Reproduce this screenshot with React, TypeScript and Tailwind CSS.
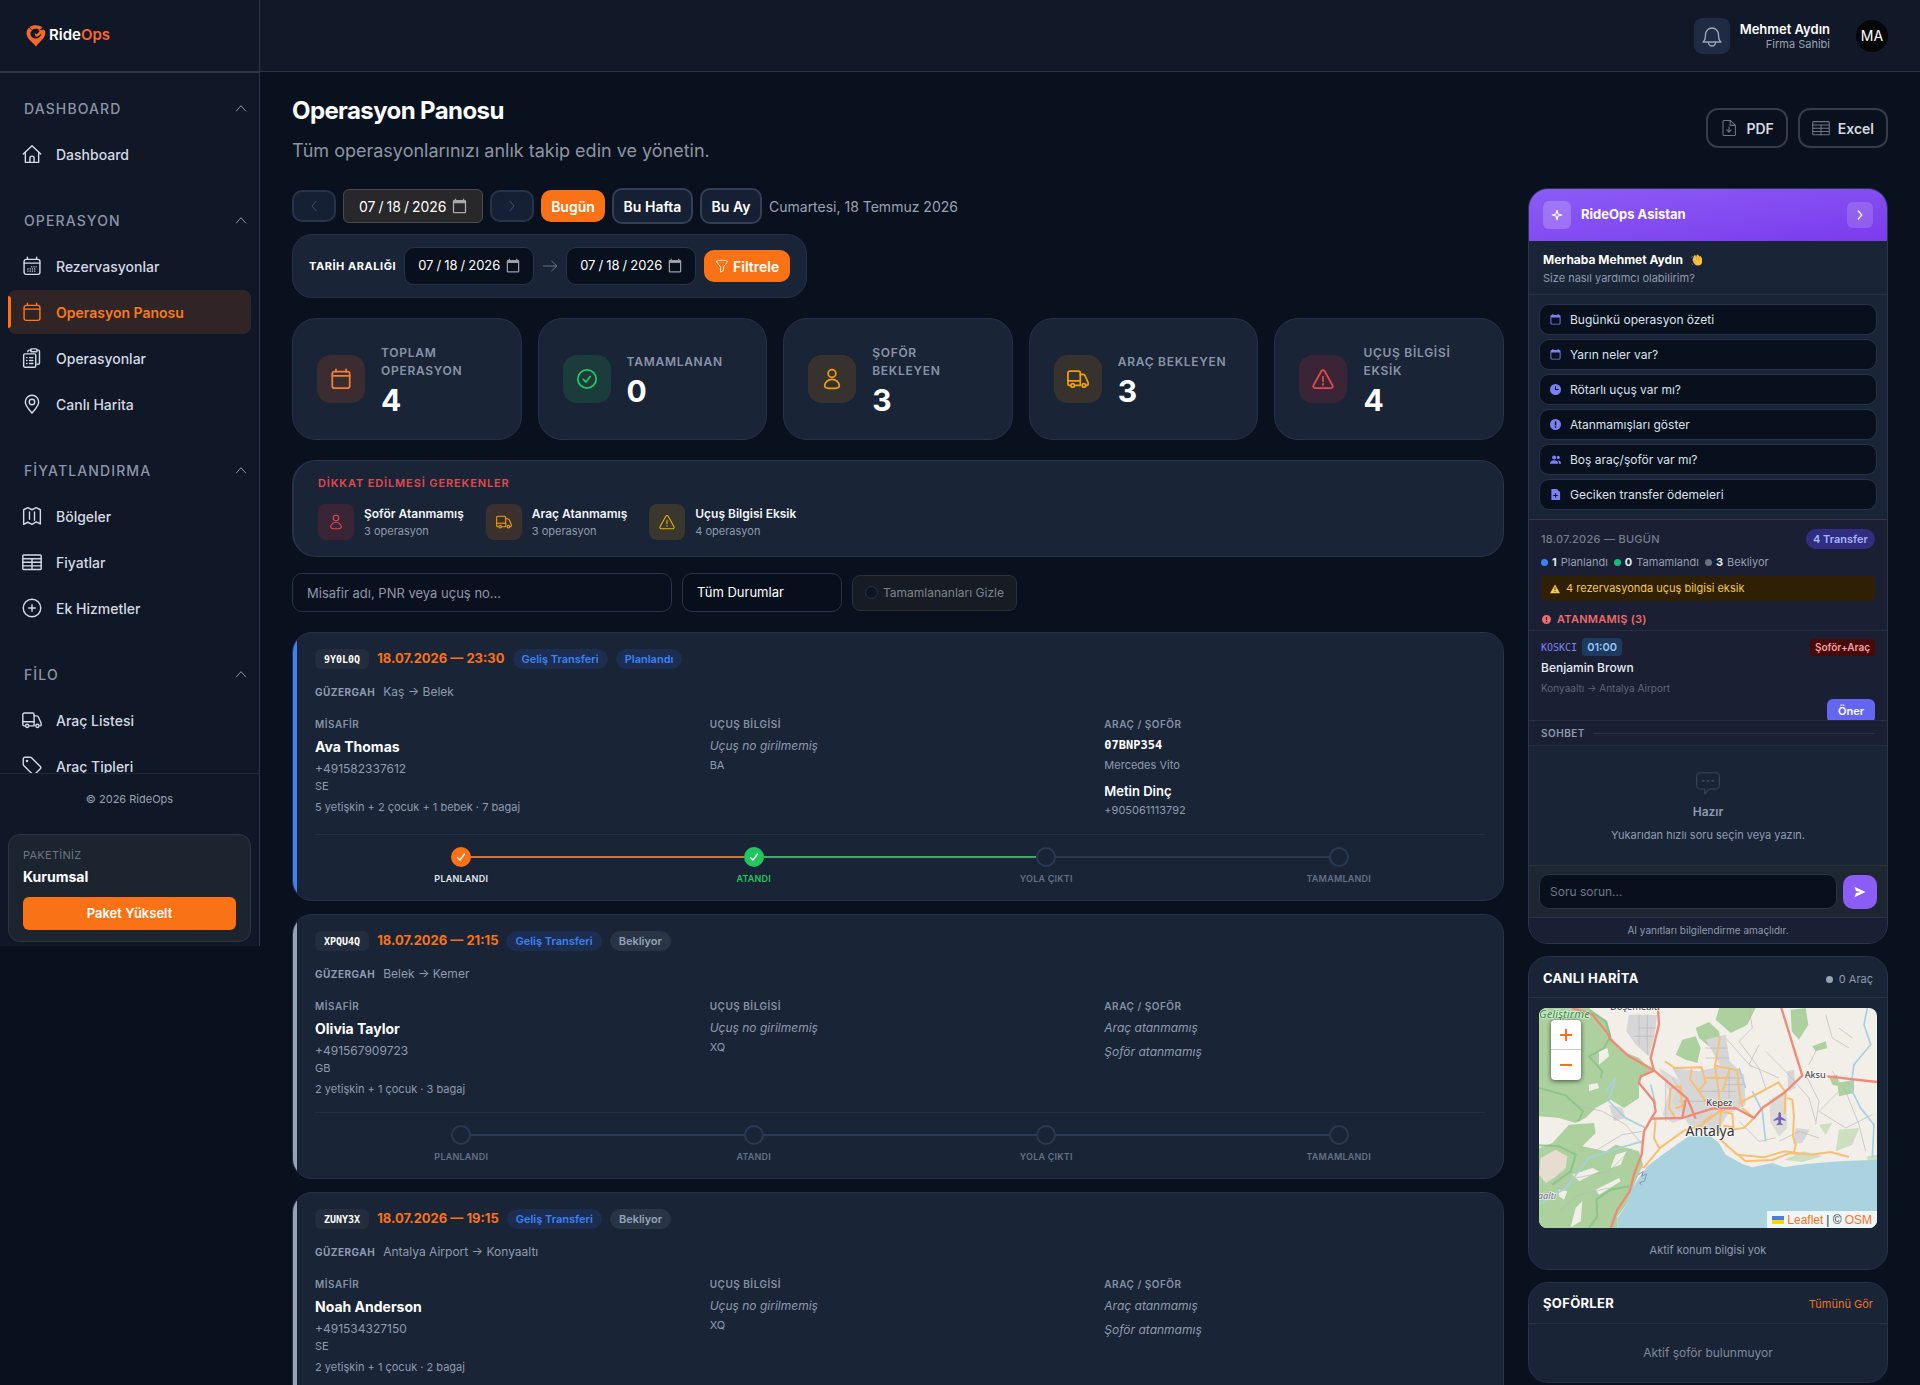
import { useState } from "react";
import type { ReactNode } from "react";
import { clsx } from "clsx";

const ICONS: Record<string, ReactNode> = {
  home: (
    <>
      <path d="M1.5 12 12 2l10.500 10" />
      <path d="M4 10v12h16V10" />
      <path d="M9.500 22v-5a2.500 2.500 0 0 1 5 0v5" />
    </>
  ),
  calendar: (
    <>
      <rect x="2.500" y="4" width="19" height="18" rx="2.500" />
      <path d="M2.500 8.500h19M6.500 1.500V4M17.500 1.500V4" />
    </>
  ),
  calendarDots: (
    <>
      <rect x="2.500" y="4" width="19" height="18" rx="2.500" />
      <path d="M2.500 8.500h19M6.500 1.500V4M17.500 1.500V4" />
      <path
        d="M7 18h9M7 15.500h10M11.500 13h5.500"
        strokeDasharray=".3 2.400"
        strokeWidth="1.500"
      />
    </>
  ),
  clipboard: (
    <>
      <path d="M7 4.500V4a1.500 1.500 0 0 1 1.500-1.500H11M18 2.500h1.500A1.500 1.500 0 0 1 21 4v14a1.500 1.500 0 0 1-1.500 1.500H18" />
      <rect x="10.500" y="1" width="7.500" height="3.500" rx="1" />
      <rect x="2" y="7" width="14.500" height="16" rx="1.500" />
      <path d="M5.500 11.500h.5M9 11.500h4M5.500 15h.5M9 15h4M5.500 18.500h.5M9 18.500h4" />
    </>
  ),
  pin: (
    <>
      <path d="M12 23C8 18 4 14 4 9.500a8 8 0 0 1 16 0C20 14 16 18 12 23Z" />
      <circle cx="12" cy="9.500" r="3.300" />
    </>
  ),
  map: (
    <path d="M2 4.500 7 2l5 2.500L17 2l5 2.500v17L17 19l-5 3-5-2.500-5 2.500ZM9 7v9M15 7v10" />
  ),
  table: (
    <>
      <rect x="1" y="3.500" width="22" height="17.500" rx="1" />
      <path d="M1 8h22M1 12.300h22M1 16.600h22M12 8v13" />
    </>
  ),
  plus: (
    <>
      <circle cx="12" cy="12" r="10.500" />
      <path d="M12 8v8M8 12h8" />
    </>
  ),
  truck: (
    <>
      <path d="M3.500 19H2.500A1.500 1.500 0 0 1 1 17.500v-12A2 2 0 0 1 3 3.500h9.500a2 2 0 0 1 2 2V19H9" />
      <path d="M14.500 7h2.700a3 3 0 0 1 2.800 2l3 7v2a1 1 0 0 1-1 1h-.5M1 14h13.500" />
      <circle cx="6.200" cy="19" r="1.900" />
      <circle cx="18.500" cy="19" r="1.900" />
    </>
  ),
  tag: (
    <>
      <path d="M1.500 3.500a2 2 0 0 1 2-2H10a2 2 0 0 1 1.400.6l10.500 10.500a2 2 0 0 1 0 2.800l-6.500 6.500a2 2 0 0 1-2.800 0L2.100 11.400A2 2 0 0 1 1.500 10Z" />
      <circle cx="6" cy="6" r=".7" />
    </>
  ),
  bell: (
    <>
      <path d="M3 18c2-1.500 2.500-4 2.500-7.500a6.500 6.500 0 0 1 13 0c0 3.500.5 6 2.500 7.500Z" />
      <path d="M8.500 18.500a3.500 3.500 0 0 0 7 0" />
    </>
  ),
  file: (
    <>
      <path d="M4 3.500A1.500 1.500 0 0 1 5.500 2h8.500L20.500 8.500v12a1.500 1.500 0 0 1-1.500 1.500H5.500A1.500 1.500 0 0 1 4 20.500ZM13.500 2v6.500h7" />
      <path d="M12 10.500v6.500M9 14.500l3 3 3-3" />
    </>
  ),
  check: (
    <>
      <circle cx="12" cy="12" r="10" />
      <path d="m8 12.500 3 2.800 4.500-6" />
    </>
  ),
  user: (
    <>
      <circle cx="12" cy="6" r="4.200" />
      <path d="M12 12.500c-4.500 0-8 3.500-8 7 0 1.800 3.500 2.700 8 2.700s8-.9 8-2.700c0-3.500-3.500-7-8-7Z" />
    </>
  ),
  warning: (
    <>
      <path d="M10.300 3.300a2 2 0 0 1 3.400 0l8.600 15.500A2 2 0 0 1 20.600 22H3.400a2 2 0 0 1-1.700-3.200Z" />
      <path d="M12 9.500v5M12 17.300v1.200" />
    </>
  ),
  chat: (
    <>
      <path d="M5 2.500h14a3.500 3.500 0 0 1 3.500 3.500v8a3.500 3.500 0 0 1-3.500 3.500h-5.500L9 22v-4.500H5A3.500 3.500 0 0 1 1.500 14V6A3.500 3.500 0 0 1 5 2.500Z" />
      <path d="M7 10h1.200M11.400 10h1.200M15.800 10H17" strokeWidth="1.600" />
    </>
  ),
  funnel: (
    <path d="M2.500 4C5 1.500 19 1.500 21.500 4c0 2-7 8.500-7 10v6l-5 2.500V14c0-1.500-7-8-7-10Z" />
  ),
  spark: <path d="M12 2.500 14 10l7.500 2-7.500 2-2 7.500-2-7.500-7.500-2L10 10Z" />,
  up: <path d="m4 17 8-9 8 9" />,
  left: <path d="m15.500 4-7 8 7 8" />,
  right: <path d="m8.500 4 7 8-7 8" />,
  arrow: <path d="M2 12h20M14.500 4.500 22 12l-7.500 7.500" />,
};

function Icon({
  name,
  className,
  stroke = 1.7,
}: {
  name: string;
  className?: string;
  stroke?: number;
}) {
  return (
    <svg
      viewBox="0 0 24 24"
      fill="none"
      stroke="currentColor"
      strokeWidth={stroke}
      strokeLinecap="round"
      strokeLinejoin="round"
      className={clsx("shrink-0", className)}
      aria-hidden
    >
      {ICONS[name]}
    </svg>
  );
}

// filled variants used in the assistant panel
const SOLID: Record<string, ReactNode> = {
  calendar: (
    <path
      fillRule="evenodd"
      d="M5 0h2.500v2h9V0H19v2h1a3 3 0 0 1 3 3v15a3 3 0 0 1-3 3H4a3 3 0 0 1-3-3V5a3 3 0 0 1 3-3h1ZM3 7.500V20a1 1 0 0 0 1 1h16a1 1 0 0 0 1-1V7.500Z"
    />
  ),
  clock: (
    <path
      fillRule="evenodd"
      d="M12 0a12 12 0 1 0 0 24 12 12 0 0 0 0-24Zm-1 5h2v6h6v2h-8Z"
    />
  ),
  alert: (
    <path
      fillRule="evenodd"
      d="M12 0a12 12 0 1 0 0 24 12 12 0 0 0 0-24Zm-1.500 5h3v9h-3Zm0 11h3v3h-3Z"
    />
  ),
  people: (
    <path d="M9 3a4.500 4.500 0 1 1 0 9 4.500 4.500 0 0 1 0-9Zm9 1a3.500 3.500 0 1 1 0 7 3.500 3.500 0 0 1 0-7ZM0 21c0-5 4-7.500 9-7.500s9 2.500 9 7.500Zm19.500 0c0-3-1-5-2.500-7 4-.5 7 2 7 7Z" />
  ),
  fileplus: (
    <path
      fillRule="evenodd"
      d="M3 0h12l7 7v17H3Zm8 9v4H7v2h4v4h2v-4h4v-2h-4V9Z"
    />
  ),
  warning: (
    <path
      fillRule="evenodd"
      d="M12 1 24 22H0Zm-1 7v7h2V8Zm0 9v2h2v-2Z"
    />
  ),
  send: <path d="M1 1.500 23 12 1 22.500 4 14l9-2-9-2Z" />,
};

function Solid({ name, className }: { name: string; className?: string }) {
  return (
    <svg
      viewBox="0 0 24 24"
      fill="currentColor"
      className={clsx("shrink-0", className)}
      aria-hidden
    >
      {SOLID[name]}
    </svg>
  );
}

const NAV = [
  { title: "DASHBOARD", items: [["home", "Dashboard"]] },
  {
    title: "OPERASYON",
    items: [
      ["calendarDots", "Rezervasyonlar"],
      ["calendar", "Operasyon Panosu"],
      ["clipboard", "Operasyonlar"],
      ["pin", "Canlı Harita"],
    ],
  },
  {
    title: "FİYATLANDIRMA",
    items: [
      ["map", "Bölgeler"],
      ["table", "Fiyatlar"],
      ["plus", "Ek Hizmetler"],
    ],
  },
  {
    title: "FİLO",
    items: [
      ["truck", "Araç Listesi"],
      ["tag", "Araç Tipleri"],
    ],
  },
];

function Sidebar() {
  const active = "Operasyon Panosu";
  return (
    <aside className="flex h-[946px] w-[260px] shrink-0 flex-col border-r border-[#2b3548] bg-[#101726]">
      <div className="flex h-[73px] shrink-0 items-center gap-[3px] border-b-2 border-[#2b3548] pl-[26px]">
        <svg viewBox="0 0 40 44" className="h-[22px] w-5" aria-hidden>
          <path
            fill="#f9672a"
            d="M20 43C13 34 1 28 1 16 1 12 3 8 6 5l6 6c-3 3-4 7-2 11 3 6 13 7 18 1 2-2 2-5 2-8l4-5 4 1c4 14-11 22-18 32Z"
          />
          <path fill="#f9672a" d="M7 4C14-1 26-1 33 5l-6 5C22 6 16 7 12 10Z" />
          <path
            fill="#f9672a"
            d="M36 9 24 11l3 2-6 6-4-3 2 7c4 1 8-1 11-6l3 3Z"
          />
        </svg>
        <span className="text-[15px] font-semibold text-white">
          Ride<span className="text-[#f9672a]">Ops</span>
        </span>
      </div>
      <nav className="flex min-h-0 flex-1 flex-col gap-[22px] overflow-hidden px-2 pt-[13px]">
        {NAV.map((group) => (
          <div key={group.title} className="flex flex-col gap-0.5">
            <button
              type="button"
              className="flex h-11 shrink-0 items-center justify-between pl-4 pr-[3px] text-[14px] font-medium tracking-[0.08em] text-[#8b95a7]"
            >
              {group.title}
              <Icon name="up" className="size-3.5" />
            </button>
            {group.items.map(([icon, label]) => (
              <a
                key={label}
                href="#"
                className={clsx(
                  "flex h-11 shrink-0 items-center rounded-lg text-[14px]",
                  label === active
                    ? "bg-[#312427] font-semibold text-[#f97a1c]"
                    : "font-medium text-[#d3dae5]",
                )}
              >
                <span
                  className={clsx(
                    "mr-[11px] h-8 w-[3px]",
                    label === active && "rounded-r bg-[#f97316]",
                  )}
                />
                <Icon name={icon} className="mr-3.5 size-5" />
                {label}
              </a>
            ))}
          </div>
        ))}
      </nav>
      <div className="shrink-0 border-t border-[#1f293b] px-2 pb-1">
        <p className="py-4 text-center text-[11px] leading-[18px] text-[#98a2b3]">
          © 2026 RideOps
        </p>
        <div className="mt-2.5 rounded-xl border border-[#2b3642] bg-[#1b242f] px-3.5 pb-[11px] pt-3">
          <p className="text-[11px] leading-4 tracking-wide text-[#6b7584]">
            PAKETİNİZ
          </p>
          <p className="mt-0.5 text-[14px] font-bold leading-6 text-white">
            Kurumsal
          </p>
          <button
            type="button"
            className="mt-2 h-[33px] w-full rounded-md bg-[#f97316] text-[13px] font-semibold text-white"
          >
            Paket Yükselt
          </button>
        </div>
      </div>
    </aside>
  );
}

function Topbar() {
  return (
    <header className="flex h-[72px] shrink-0 items-center justify-end border-b border-[#2b3548] bg-[#111827] pr-8">
      <button
        type="button"
        aria-label="Bildirimler"
        className="flex size-9 items-center justify-center rounded-lg bg-[#1e2b43] text-[#9aa5b8]"
      >
        <Icon name="bell" className="size-6" stroke={1.4} />
      </button>
      <div className="ml-2.5 mr-[26px] text-right">
        <p className="text-[13px] font-semibold leading-4 text-white">
          Mehmet Aydın
        </p>
        <p className="text-[11px] leading-[14px] text-[#98a2b3]">
          Firma Sahibi
        </p>
      </div>
      <span className="flex size-8 items-center justify-center rounded-full bg-[#050608] text-[14px] text-white">
        MA
      </span>
    </header>
  );
}

const dateInput =
  "text-white [color-scheme:dark] [&::-webkit-calendar-picker-indicator]:ml-0 [&::-webkit-calendar-picker-indicator]:p-0 [&::-webkit-calendar-picker-indicator]:opacity-60";
const rangeInput =
  "h-[38px] w-[130px] rounded-[10px] border border-[#26334a] bg-[#08101d] px-3 text-[13px] [&::-webkit-calendar-picker-indicator]:size-4 [&::-webkit-datetime-edit-text]:px-0.5";

function DateToolbar() {
  const arrowBtn =
    "flex h-8 w-11 items-center justify-center rounded-[10px] border-2 border-[#25344b] bg-[#162035] text-[#4b5a72]";
  const rangeBtn =
    "h-9 rounded-[10px] border-2 border-[#323f54] bg-[#162035] text-[14px] font-semibold text-white";
  return (
    <div className="flex flex-col items-start gap-2.5">
      <div className="flex items-center gap-[7px]">
        <button type="button" aria-label="Önceki gün" className={arrowBtn}>
          <Icon name="left" className="size-3.5" stroke={1.4} />
        </button>
        <input
          type="date"
          aria-label="Tarih"
          defaultValue="2026-07-18"
          className={clsx(
            "h-[34px] w-[140px] rounded-md border border-[#4b4b4e] bg-[#28282a] px-3.5 text-[14px] [&::-webkit-calendar-picker-indicator]:size-[17px] [&::-webkit-datetime-edit-text]:px-0.5",
            dateInput,
          )}
        />
        <button type="button" aria-label="Sonraki gün" className={arrowBtn}>
          <Icon name="right" className="size-3.5" stroke={1.4} />
        </button>
        <button
          type="button"
          className="h-8 w-16 rounded-[10px] bg-[#f97316] text-[14px] font-semibold text-white"
        >
          Bugün
        </button>
        <button type="button" className={clsx(rangeBtn, "w-[81px]")}>
          Bu Hafta
        </button>
        <button type="button" className={clsx(rangeBtn, "w-[62px]")}>
          Bu Ay
        </button>
        <span className="text-[14px] text-[#98a2b3]">
          Cumartesi, 18 Temmuz 2026
        </span>
      </div>
      <div className="flex h-16 items-center rounded-[20px] border border-[#253149] bg-[#192436] px-4">
        <span className="mr-2 text-[11px] font-bold tracking-wider text-white">
          TARİH ARALIĞI
        </span>
        <input
          type="date"
          aria-label="Başlangıç"
          defaultValue="2026-07-18"
          className={clsx(rangeInput, dateInput)}
        />
        <Icon name="arrow" className="mx-2 size-4 text-[#7e899b]" stroke={1.2} />
        <input
          type="date"
          aria-label="Bitiş"
          defaultValue="2026-07-18"
          className={clsx(rangeInput, dateInput)}
        />
        <button
          type="button"
          className="ml-2 flex h-8 w-[86px] items-center justify-center gap-1 rounded-[10px] bg-[#f97316] text-[14px] font-semibold text-white"
        >
          <Icon name="funnel" className="size-3.5" stroke={1.4} />
          Filtrele
        </button>
      </div>
    </div>
  );
}

const STATS = [
  ["calendar", "TOPLAM OPERASYON", "4", "bg-[#3a2c30] text-[#f08130]"],
  ["check", "TAMAMLANAN", "0", "bg-[#1c3b3b] text-[#27c664]"],
  ["user", "ŞOFÖR BEKLEYEN", "3", "bg-[#38322e] text-[#efa011]"],
  ["truck", "ARAÇ BEKLEYEN", "3", "bg-[#38322e] text-[#efa011]"],
  ["warning", "UÇUŞ BİLGİSİ EKSİK", "4", "bg-[#3a2536] text-[#e34a4d]"],
];

function Stats() {
  return (
    <div className="mt-5 grid grid-cols-5 gap-4">
      {STATS.map(([icon, label, value, tone]) => (
        <div
          key={label}
          className="flex h-[122px] items-center gap-4 rounded-3xl border border-[#253149] bg-[#192436] pl-6 pr-7"
        >
          <span
            className={clsx(
              "flex size-12 shrink-0 items-center justify-center rounded-[14px]",
              tone,
            )}
          >
            <Icon name={icon} className="size-[22px]" stroke={1.9} />
          </span>
          <div>
            <p className="text-[12px] font-semibold leading-[18px] tracking-[0.06em] text-[#8994a8]">
              {label}
            </p>
            <p className="mt-[5px] text-[30px] font-bold leading-[30px] text-white">
              {value}
            </p>
          </div>
        </div>
      ))}
    </div>
  );
}

const ALERTS = [
  ["user", "Şoför Atanmamış", "3 operasyon", "bg-[#3a2536] text-[#e34a4d]"],
  ["truck", "Araç Atanmamış", "3 operasyon", "bg-[#3b302d] text-[#f59e0b]"],
  ["warning", "Uçuş Bilgisi Eksik", "4 operasyon", "bg-[#3a372f] text-[#eab30f]"],
];

function Alerts() {
  return (
    <section className="mt-5 rounded-3xl border border-l-2 border-[#25334d] bg-[#192436] px-6 pb-4 pt-[13px]">
      <h2 className="text-[11px] font-semibold leading-[18px] tracking-[0.08em] text-[#e24a4f]">
        DİKKAT EDİLMESİ GEREKENLER
      </h2>
      <div className="mt-3 flex gap-[22px]">
        {ALERTS.map(([icon, label, sub, tone]) => (
          <div key={label} className="flex items-center gap-2.5">
            <span
              className={clsx(
                "flex size-9 items-center justify-center rounded-lg",
                tone,
              )}
            >
              <Icon name={icon} className="size-4" stroke={1.6} />
            </span>
            <div>
              <p className="text-[12px] font-semibold leading-[18px] text-[#f1f5f9]">
                {label}
              </p>
              <p className="text-[11px] leading-[17px] text-[#8f9aae]">{sub}</p>
            </div>
          </div>
        ))}
      </div>
    </section>
  );
}

function Filters() {
  const [hide, setHide] = useState(false);
  return (
    <div className="mt-4 flex items-center gap-2.5">
      <input
        type="text"
        aria-label="Operasyon ara"
        placeholder="Misafir adı, PNR veya uçuş no..."
        className="h-[39px] w-[380px] rounded-[10px] border border-[#27344a] bg-[#0a101e] px-3.5 text-[13px] text-white placeholder:text-[#8e98a9]"
      />
      <select
        aria-label="Durum"
        className="h-[39px] w-40 appearance-none rounded-[10px] border border-[#27344a] bg-[#080f1c] px-3.5 text-[13px] text-white"
      >
        <option>Tüm Durumlar</option>
      </select>
      <label className="flex h-9 items-center gap-[5px] rounded-lg border border-[#2b3037] bg-[#171b23] px-3 text-[12px] text-[#7d8592]">
        <input
          type="checkbox"
          checked={hide}
          onChange={() => setHide(!hide)}
          className="size-[13px] appearance-none rounded-full border border-[#26344d] bg-[#0d1523] checked:bg-[#f97316]"
        />
        Tamamlananları Gizle
      </label>
    </div>
  );
}

type Op = {
  pnr: string;
  date: string;
  status: string;
  route: string;
  guest: string;
  phone: string;
  country: string;
  pax: string;
  airline: string;
  vehicle?: { plate: string; model: string; driver: string; phone: string };
};

const OPS: Op[] = [
  {
    pnr: "9Y0L0Q",
    date: "18.07.2026 — 23:30",
    status: "Planlandı",
    route: "Kaş → Belek",
    guest: "Ava Thomas",
    phone: "+491582337612",
    country: "SE",
    pax: "5 yetişkin + 2 çocuk + 1 bebek · 7 bagaj",
    airline: "BA",
    vehicle: {
      plate: "07BNP354",
      model: "Mercedes Vito",
      driver: "Metin Dinç",
      phone: "+905061113792",
    },
  },
  {
    pnr: "XPQU4Q",
    date: "18.07.2026 — 21:15",
    status: "Bekliyor",
    route: "Belek → Kemer",
    guest: "Olivia Taylor",
    phone: "+491567909723",
    country: "GB",
    pax: "2 yetişkin + 1 çocuk · 3 bagaj",
    airline: "XQ",
  },
  {
    pnr: "ZUNY3X",
    date: "18.07.2026 — 19:15",
    status: "Bekliyor",
    route: "Antalya Airport → Konyaaltı",
    guest: "Noah Anderson",
    phone: "+491534327150",
    country: "SE",
    pax: "2 yetişkin + 1 çocuk · 2 bagaj",
    airline: "XQ",
  },
];

const STEPS = ["PLANLANDI", "ATANDI", "YOLA ÇIKTI", "TAMAMLANDI"];

function Stepper({ assigned }: { assigned: boolean }) {
  const line = (i: number) => {
    if (i < 0 || i > 2) return "bg-transparent";
    if (!assigned) return "bg-[#2a3a55]";
    return ["bg-[#c77a3d]", "bg-[#43a868]", "bg-[#2b384d]"][i];
  };
  return (
    <div className="grid grid-cols-4 border-t border-[#232f42] pt-3">
      {STEPS.map((label, i) => (
        <div key={label}>
          <div className="flex items-center">
            <span className={clsx("h-0.5 flex-1", line(i - 1))} />
            {assigned && i < 2 ? (
              <span
                className={clsx(
                  "flex size-5 items-center justify-center rounded-full text-white",
                  i === 0 ? "bg-[#f97316]" : "bg-[#22c55e]",
                )}
              >
                <svg
                  viewBox="0 0 10 10"
                  className="size-2.5"
                  fill="none"
                  stroke="currentColor"
                  strokeWidth="1.300"
                  strokeLinecap="round"
                  aria-hidden
                >
                  <path d="M1.500 5.500 4 8l4.500-6" />
                </svg>
              </span>
            ) : (
              <span className="size-5 rounded-full border-2 border-[#2a3a52]" />
            )}
            <span className={clsx("h-0.5 flex-1", line(i))} />
          </div>
          <p
            className={clsx(
              "mt-[5px] text-center text-[9px] font-semibold leading-[14px] tracking-wide",
              assigned && i === 0
                ? "text-[#e2e8f0]"
                : assigned && i === 1
                  ? "text-[#22c55e]"
                  : "text-[#647086]",
            )}
          >
            {label}
          </p>
        </div>
      ))}
    </div>
  );
}

function OpCard({ op }: { op: Op }) {
  const head =
    "mb-1 text-[10px] font-semibold leading-[14px] tracking-wider text-[#8591a5]";
  return (
    <article className="flex overflow-hidden rounded-[20px] border border-[#253149] bg-[#192436]">
      <span
        className={clsx(
          "w-1 shrink-0",
          op.vehicle ? "bg-[#3b82f6]" : "bg-[#94a3b8]",
        )}
      />
      <div className="min-w-0 flex-1 px-[18px] pb-3.5 pt-4">
        <div className="flex h-5 items-center gap-2">
          <span className="flex h-5 items-center rounded-md bg-[#232d3d] px-[9px] font-['DejaVu_Sans_Mono',monospace] text-[10px] font-bold text-white">
            {op.pnr}
          </span>
          <span className="text-[13px] font-bold text-[#f97316]">
            {op.date}
          </span>
          <span className="flex h-5 items-center rounded-full bg-[#1c2d50] px-[9px] text-[11px] font-semibold text-[#3d82f4]">
            Geliş Transferi
          </span>
          <span
            className={clsx(
              "flex h-5 items-center rounded-full px-[9px] text-[11px] font-semibold",
              op.vehicle
                ? "bg-[#1c2d50] text-[#3d82f4]"
                : "bg-[#293446] text-[#94a3b8]",
            )}
          >
            {op.status}
          </span>
        </div>
        <p className="mt-3.5 flex items-center gap-2 text-[12px] leading-[18px] text-[#8f9bb0]">
          <span className="text-[10px] font-bold tracking-wider">GÜZERGAH</span>
          {op.route}
        </p>
        <div className="mt-4 grid grid-cols-3 gap-3.5 pb-[15px]">
          <div>
            <p className={head}>MİSAFİR</p>
            <p className="text-[14px] font-bold leading-6 text-white">
              {op.guest}
            </p>
            <p className="text-[12px] leading-[19px] text-[#8f9bb0]">
              {op.phone}
            </p>
            <p className="text-[11px] leading-4 text-[#8f9bb0]">{op.country}</p>
            <p className="mt-[5px] text-[11px] leading-4 text-[#8f9bb0]">
              {op.pax}
            </p>
          </div>
          <div>
            <p className={head}>UÇUŞ BİLGİSİ</p>
            <p className="text-[12px] italic leading-[21px] text-[#8f9bb0]">
              Uçuş no girilmemiş
            </p>
            <p className="text-[11px] leading-[18px] text-[#8f9bb0]">
              {op.airline}
            </p>
          </div>
          <div>
            <p className={head}>ARAÇ / ŞOFÖR</p>
            {op.vehicle ? (
              <>
                <p className="font-['DejaVu_Sans_Mono',monospace] text-[12px] font-bold leading-[21px] text-white">
                  {op.vehicle.plate}
                </p>
                <p className="text-[11px] leading-[18px] text-[#8f9bb0]">
                  {op.vehicle.model}
                </p>
                <p className="mt-[7px] text-[13px] font-semibold leading-5 text-white">
                  {op.vehicle.driver}
                </p>
                <p className="text-[11px] leading-[18px] text-[#8f9bb0]">
                  {op.vehicle.phone}
                </p>
              </>
            ) : (
              <>
                <p className="text-[12px] italic leading-[21px] text-[#8f9bb0]">
                  Araç atanmamış
                </p>
                <p className="mt-[3px] text-[12px] italic leading-[21px] text-[#8f9bb0]">
                  Şoför atanmamış
                </p>
              </>
            )}
          </div>
        </div>
        <Stepper assigned={!!op.vehicle} />
      </div>
    </article>
  );
}

const QUESTIONS = [
  ["calendar", "Bugünkü operasyon özeti"],
  ["calendar", "Yarın neler var?"],
  ["clock", "Rötarlı uçuş var mı?"],
  ["alert", "Atanmamışları göster"],
  ["people", "Boş araç/şoför var mı?"],
  ["fileplus", "Geciken transfer ödemeleri"],
];

const SUMMARY = [
  ["1", "Planlandı", "bg-[#3b82f6]"],
  ["0", "Tamamlandı", "bg-[#16b981]"],
  ["3", "Bekliyor", "bg-[#6b7280]"],
];

function Assistant() {
  return (
    <section className="overflow-hidden rounded-[20px] border border-[#2a3550] bg-[#192436]">
      <div className="flex h-[52px] items-center bg-linear-to-br from-[#8b5cf6] to-[#7c3aed] px-3.5">
        <span className="flex size-7 items-center justify-center rounded-md bg-white/20 text-white">
          <Icon name="spark" className="size-3" stroke={2.2} />
        </span>
        <h2 className="ml-2.5 flex-1 text-[13px] font-bold text-white">
          RideOps Asistan
        </h2>
        <button
          type="button"
          aria-label="Daralt"
          className="flex size-[26px] items-center justify-center rounded-md bg-white/15 text-white"
        >
          <Icon name="right" className="size-3" stroke={2.6} />
        </button>
      </div>
      <div className="border-b border-[#25324a] px-3.5 pb-[7px] pt-2.5">
        <p className="flex items-center gap-2 text-[12px] font-bold leading-[18px] text-white">
          Merhaba Mehmet Aydın
          <svg viewBox="0 0 24 24" className="size-3" role="img" aria-label="el">
            <path
              fill="#fbc13c"
              d="M3 12 6 3l3-1 1 4 2-5 3 1 1 3 3-1 3 5v7c0 4-3 7-8 7-6 0-9-4-11-11Z"
            />
            <path
              d="m11 6 1 6M15 5l1 7M5 12l5 5"
              stroke="#e2932a"
              strokeWidth="1.500"
              fill="none"
            />
            <path d="M1 8 3 4M1 19l3 3" stroke="#3a78b8" strokeWidth="2" />
          </svg>
        </p>
        <p className="text-[11px] leading-[18px] text-[#8f9bb0]">
          Size nasıl yardımcı olabilirim?
        </p>
      </div>
      <div className="flex flex-col gap-1 border-b border-[#2b3750] px-2.5 py-[9px]">
        {QUESTIONS.map(([icon, label]) => (
          <button
            key={label}
            type="button"
            className="flex h-[31px] items-center gap-[9px] rounded-[10px] border border-[#26334a] bg-[#08101d] px-2.5 text-[12px] text-[#dbe2ec]"
          >
            <Solid name={icon} className="size-[11px] text-[#7c80f2]" />
            {label}
          </button>
        ))}
      </div>
      <div className="h-[200px] overflow-hidden bg-[#1a1f33] pt-[9px]">
        <div className="px-3">
          <div className="flex h-5 items-center justify-between">
            <span className="text-[11px] font-medium tracking-wide text-[#747d8e]">
              18.07.2026 — BUGÜN
            </span>
            <span className="flex h-5 items-center rounded-full bg-[#312e81] px-[7px] text-[11px] font-semibold text-[#a5b4fc]">
              4 Transfer
            </span>
          </div>
          <div className="mt-1 flex h-[18px] items-center gap-1.5 text-[11px] text-[#949eb0]">
            {SUMMARY.map(([n, label, dot]) => (
              <span key={label} className="flex items-center gap-1">
                <span className={clsx("size-[7px] rounded-full", dot)} />
                <b className="font-bold text-[#e2e8f0]">{n}</b>
                {label}
              </span>
            ))}
          </div>
          <p className="mt-[5px] flex h-[25px] items-center gap-1.5 rounded bg-[#2f1f05] px-[9px] text-[11px] text-[#f5cb47]">
            <Solid name="warning" className="size-2.5" />4 rezervasyonda uçuş
            bilgisi eksik
          </p>
        </div>
        <h3 className="mt-2 flex h-[22px] items-center gap-1.5 border-b border-[#252f44] px-3 text-[11px] font-semibold tracking-wide text-[#ee6b6e]">
          <Solid name="alert" className="ml-px size-[9px]" />
          ATANMAMIŞ (3)
        </h3>
        <div className="px-3 pt-[7px]">
          <div className="flex h-[18px] items-center">
            <span className="font-['DejaVu_Sans_Mono',monospace] text-[10px] text-[#7f83f5]">
              KOSKCI
            </span>
            <span className="ml-[5px] flex h-[18px] items-center rounded bg-[#1e3a5f] px-[5px] text-[11px] font-semibold text-[#93c5fd]">
              01:00
            </span>
            <span className="ml-auto flex h-[17px] items-center rounded-sm bg-[#450a0a] px-[5px] text-[10px] font-semibold text-[#f7a0a0]">
              Şoför+Araç
            </span>
          </div>
          <p className="mt-1 text-[12px] font-medium leading-4 text-[#e8edf4]">
            Benjamin Brown
          </p>
          <p className="mt-1 text-[10px] leading-4 text-[#5d6779]">
            Konyaaltı → Antalya Airport
          </p>
          <button
            type="button"
            className="ml-auto mt-[3px] block h-6 w-12 rounded-md bg-[#6366f1] text-[11px] font-semibold text-white"
          >
            Öner
          </button>
        </div>
      </div>
      <div className="flex h-[26px] items-center gap-2 border-y border-[#252f44] bg-[#1a1f33] px-3">
        <span className="text-[10px] font-semibold tracking-wider text-[#8f9bb0]">
          SOHBET
        </span>
        <span className="h-px flex-1 bg-[#28324a]" />
      </div>
      <div className="flex h-[119px] flex-col items-center pt-6">
        <Icon name="chat" className="size-[26px] text-[#3a4558]" stroke={1} />
        <p className="mt-[7px] text-[12px] font-semibold leading-[18px] text-[#8f9bb0]">
          Hazır
        </p>
        <p className="mt-[5px] text-[11px] leading-[18px] text-[#8f9bb0]">
          Yukarıdan hızlı soru seçin veya yazın.
        </p>
      </div>
      <form
        className="flex h-[52px] items-center gap-1.5 border-t border-[#29343f] bg-[#1e2631] px-2.5"
        onSubmit={(e) => e.preventDefault()}
      >
        <input
          type="text"
          aria-label="Soru"
          placeholder="Soru sorun..."
          className="h-[35px] min-w-0 flex-1 rounded-[10px] border border-[#26334a] bg-[#08101d] px-2.5 text-[12px] text-white placeholder:text-[#6e7889]"
        />
        <button
          type="submit"
          aria-label="Gönder"
          className="flex size-[34px] items-center justify-center rounded-[10px] bg-[#8b5cf6] text-white"
        >
          <Solid name="send" className="size-3" />
        </button>
      </form>
      <p className="flex h-[26px] items-center justify-center border-t border-[#252f44] bg-[#1a2033] text-[10px] text-[#8f9bb0]">
        AI yanıtları bilgilendirme amaçlıdır.
      </p>
    </section>
  );
}

function CityMap() {
  return (
    <svg
      viewBox="0 0 1014 660"
      preserveAspectRatio="xMidYMid slice"
      className="h-full w-full"
      role="img"
      aria-label="Antalya haritası"
    >
      <rect width="1014" height="660" fill="#f2efe9" />
      <g fill="#add19e">
        <path d="M0 0H150L205 40 218 90 250 130 300 150 340 188 300 215 300 270 255 300 215 275 170 300 140 330 110 345 60 330 0 325Z" />
        <path d="M0 420 40 405 90 350 165 345 170 375 130 415 200 430 230 410 300 430 312 470 285 530 262 590 235 625 235 660H0Z" />
        <path d="M470 60 510 42 540 70 545 100 510 115 480 90ZM540 0H650L625 50 575 75 530 35Z" />
        <path d="M430 95 470 85 485 120 475 165 440 155 410 140ZM755 5 800 0 808 50 780 95 758 70Z" />
        <path d="M895 225 945 215 945 255 900 265ZM820 115 860 100 865 120 830 130ZM870 205 895 200 900 235 880 230Z" />
        <path d="M700 270 730 265 730 325 700 345Z" opacity=".7" />
        <path d="M735 455 795 430 850 445 790 462ZM900 365 960 360 940 410 890 430ZM840 350 880 345 860 380ZM985 445 1014 440V458L985 460Z" opacity=".55" />
      </g>
      <g fill="#f2efe9">
        <path d="M180 130 205 120 210 145 180 170ZM150 230 175 225 180 240 150 250Z" />
        <path d="M110 600 130 580 125 640 95 658ZM60 545 85 550 75 575 60 565ZM230 440 262 430 245 470 215 480Z" />
        <path d="M100 500 160 480 180 490 120 520ZM170 545 240 510 245 520 180 560Z" />
      </g>
      <path d="M5 450 50 425 85 445 80 480 45 510 20 525 0 500Z" fill="#e6dcd0" />
      <g fill="none" stroke="#84c084" strokeWidth="6" opacity=".8">
        <path d="M150 8 200 40 214 85 195 120 150 145 190 190 185 210M0 240 80 262 132 310 118 340M0 412 60 415 110 440 95 490 40 530M150 660 175 625 172 575 215 545 270 535" />
      </g>
      <g fill="#d6d6d6">
        <path d="M270 20H355L345 90 330 145 290 110 262 70Z" />
        <path d="M500 95 560 80 572 160 615 200 620 290 565 320 535 370 450 350 430 320 400 280 425 225 400 180 480 190 545 175Z" />
        <path d="M360 180 420 215 465 280 440 330 400 345 370 320 390 250Z" opacity=".8" />
        <path d="M770 360 812 365 790 405 762 408ZM210 290 250 300 260 330 225 340ZM745 190 765 185 770 240 748 250Z" />
      </g>
      <path d="M690 275 740 250 745 360 720 385 695 345Z" fill="#dcdcd6" />
      <g fill="none" stroke="#b9b6bd" strokeWidth="2">
        <path d="M300 60h50M285 85h55M300 20v90M325 20v120M630 0 640 60 600 100 660 180 680 240M560 90 640 180M660 110 630 170 720 210M500 120h65M500 150h70M500 210h110M560 230h60M480 250h110M570 180v90M400 210 460 300M420 280h80M380 220v120M600 340 660 400 710 390M680 130 740 190 810 270 830 340M800 200 840 280 830 350M840 110 810 170M880 190 920 250 960 350 980 430M900 250 840 310 920 360 1000 320M720 400 780 370 840 390M110 290 190 310 260 350 310 410M150 440 250 380 310 370M20 560 110 510 210 490 280 420M60 610 120 560 210 540M860 20 880 90 930 120M900 60 940 90" />
      </g>
      <g fill="none" stroke="#a9cfe0" strokeWidth="5">
        <path d="M985 0 975 50 995 110 945 170 935 240 965 300 1005 350 1000 450M200 250 230 210 210 280 260 330 320 360M0 590 80 540 150 450 240 420 310 400M640 250 670 310 680 400M600 180 620 240M335 230 350 290" />
      </g>
      <path
        d="M235 660v-30l27-40 18-50 20-30 25-35 45-35 50-35 30-20h65l25 20 20 35 50 28 30 10 60-13 35 13 65-10 100-8 114-5v205Z"
        fill="#aad3df"
      />
      <path
        d="M298 500l15-10-5 15 15-8-6 22-15 5 6 8"
        fill="none"
        stroke="#8f8fc0"
        strokeWidth="3"
      />
      <g fill="none" stroke="#f7bf74" strokeWidth="6" strokeLinejoin="round">
        <path d="M543 85 528 175 538 245 546 305 541 375M378 160 408 180 488 178 500 223 478 248 453 213 458 183M525 172 595 187 600 247 610 297M600 285 660 255 718 223 740 253 737 318M610 300 645 330 615 360 575 365" />
        <path d="M745 270 760 275 765 325 762 385 770 410 765 435M395 240 390 300 410 330M395 240 425 235 430 295 410 300M500 210h60M570 190 550 250M480 250 500 280" />
        <path d="M300 478H315L365 418 435 368 485 353 545 308 580 318 583 358 553 353M350 330 345 390 360 420M520 320 490 345" />
        <path d="M545 395 595 440 675 448 735 430 815 440 875 432 930 447M560 410 620 460 700 456 750 436 830 440" />
      </g>
      <g fill="none" stroke="#f08a78" strokeWidth="7" strokeLinejoin="round">
        <path d="M100 0 160 20 205 75 215 95 270 145 345 187 445 272 470 332M357 0 360 50 335 150 345 188 305 205 300 225 345 280 350 310 335 335 315 370 308 440 285 500 272 550 235 605 215 660" />
        <path d="M335 332 430 330 520 302 590 300 645 330 670 300 735 255 790 203 727 0M430 330 440 275M865 205 1014 222" />
      </g>
      <path
        fill="#7a5fc0"
        d="M722 312l4 4v10l14 9v4l-14-4v10l5 4v3l-9-2-9 2v-3l5-4v-10l-14 4v-4l14-9v-10Z"
      />
      <g
        fontFamily="'Noto Sans', sans-serif"
        fill="#333"
        stroke="#fff"
        strokeWidth="5"
        strokeOpacity=".6"
        paintOrder="stroke"
      >
        <text x="513" y="384" fontSize="42" textAnchor="middle">
          Antalya
        </text>
        <text x="541" y="294" fontSize="28" textAnchor="middle">
          Kepez
        </text>
        <text x="797" y="211" fontSize="28">
          Aksu
        </text>
        <text x="213" y="5" fontSize="28">
          Döşemealtı
        </text>
        <text x="0" y="30" fontSize="34" fontStyle="italic" fill="#2f8f46">
          Geliştirme
        </text>
        <text x="-4" y="572" fontSize="28" fontStyle="italic" fill="#7d6b8d">
          aaltı
        </text>
      </g>
    </svg>
  );
}

function LiveMap() {
  return (
    <section className="rounded-[20px] border border-[#253149] bg-[#192436]">
      <div className="flex h-[41px] items-center justify-between border-b border-[#25314a] px-3.5 pt-1">
        <h2 className="text-[13px] font-bold tracking-wide text-white">
          CANLI HARİTA
        </h2>
        <span className="flex items-center gap-1.5 text-[11px] text-[#8f9bb0]">
          <span className="size-[7px] rounded-full bg-[#94a3b8]" />0 Araç
        </span>
      </div>
      <div className="px-2.5 pt-2.5">
        <div className="relative h-[220px] overflow-hidden rounded-lg">
          <CityMap />
          <div className="absolute left-3 top-3 flex w-[30px] flex-col rounded-sm bg-white shadow-[0_1px_5px_rgba(0,0,0,0.65)]">
            <button
              type="button"
              aria-label="Yakınlaştır"
              className="flex h-[30px] items-center justify-center border-b border-[#ccc] text-[#f97316]"
            >
              <svg viewBox="0 0 12 12" className="size-3" aria-hidden>
                <path d="M6 0v12M0 6h12" stroke="currentColor" strokeWidth="2" />
              </svg>
            </button>
            <button
              type="button"
              aria-label="Uzaklaştır"
              className="flex h-[30px] items-center justify-center text-[#f97316]"
            >
              <svg viewBox="0 0 12 12" className="size-3" aria-hidden>
                <path d="M0 6h12" stroke="currentColor" strokeWidth="2" />
              </svg>
            </button>
          </div>
          <div className="absolute bottom-0 right-0 flex h-[17px] items-center gap-[3px] bg-white/80 px-[5px] font-['Liberation_Sans',sans-serif] text-[12px] text-[#333]">
            <svg viewBox="0 0 12 8" className="h-2 w-3" aria-hidden>
              <path fill="#4c7be1" d="M0 0h12v4H0z" />
              <path fill="#ffd500" d="M0 4h12v4H0z" />
            </svg>
            <a href="#" className="text-[#f97316]">
              Leaflet
            </a>
            <span>| ©</span>
            <a href="#" className="text-[#f97316]">
              OSM
            </a>
          </div>
        </div>
      </div>
      <p className="pb-2.5 pt-[13px] text-center text-[11px] leading-[18px] text-[#8f9bb0]">
        Aktif konum bilgisi yok
      </p>
    </section>
  );
}

function Drivers() {
  return (
    <section className="rounded-[20px] border border-[#253149] bg-[#192436]">
      <div className="flex h-[41px] items-center justify-between border-b border-[#25314a] px-3.5 pt-0.5">
        <h2 className="text-[13px] font-bold tracking-wide text-white">
          ŞOFÖRLER
        </h2>
        <a href="#" className="text-[11px] text-[#ef7420]">
          Tümünü Gör
        </a>
      </div>
      <p className="py-5 text-center text-[12px] leading-[18px] text-[#7f8a9d]">
        Aktif şoför bulunmuyor
      </p>
    </section>
  );
}

export default function App() {
  const exportBtn =
    "flex h-10 items-center gap-2 rounded-xl border-2 border-[#333d4c] px-3 text-[14px] font-semibold text-[#d3dae5]";
  return (
    <div className="flex min-h-screen items-start bg-[#0a111e] font-['Inter',sans-serif]">
      <Sidebar />
      <div className="min-w-0 flex-1">
        <Topbar />
        <main className="px-8 pb-8 pt-[21px]">
          <div className="flex items-start justify-between">
            <div>
              <h1 className="text-[24px] font-bold leading-9 tracking-tight text-white">
                Operasyon Panosu
              </h1>
              <p className="mt-2 text-[18px] leading-7 text-[#8d95a3]">
                Tüm operasyonlarınızı anlık takip edin ve yönetin.
              </p>
            </div>
            <div className="mt-[15px] flex gap-2.5">
              <button type="button" className={exportBtn}>
                <Icon
                  name="file"
                  className="size-[18px] text-[#6d7787]"
                  stroke={1.4}
                />
                PDF
              </button>
              <button type="button" className={exportBtn}>
                <Icon
                  name="table"
                  className="size-[18px] text-[#6d7787]"
                  stroke={1.4}
                />
                Excel
              </button>
            </div>
          </div>
          <div className="mt-[23px] flex items-start gap-6">
            <div className="min-w-0 flex-1">
              <DateToolbar />
              <Stats />
              <Alerts />
              <Filters />
              <div className="mt-5 flex flex-col gap-[13px]">
                {OPS.map((op) => (
                  <OpCard key={op.pnr} op={op} />
                ))}
              </div>
            </div>
            <div className="flex w-[360px] shrink-0 flex-col gap-3">
              <Assistant />
              <LiveMap />
              <Drivers />
            </div>
          </div>
        </main>
      </div>
    </div>
  );
}
